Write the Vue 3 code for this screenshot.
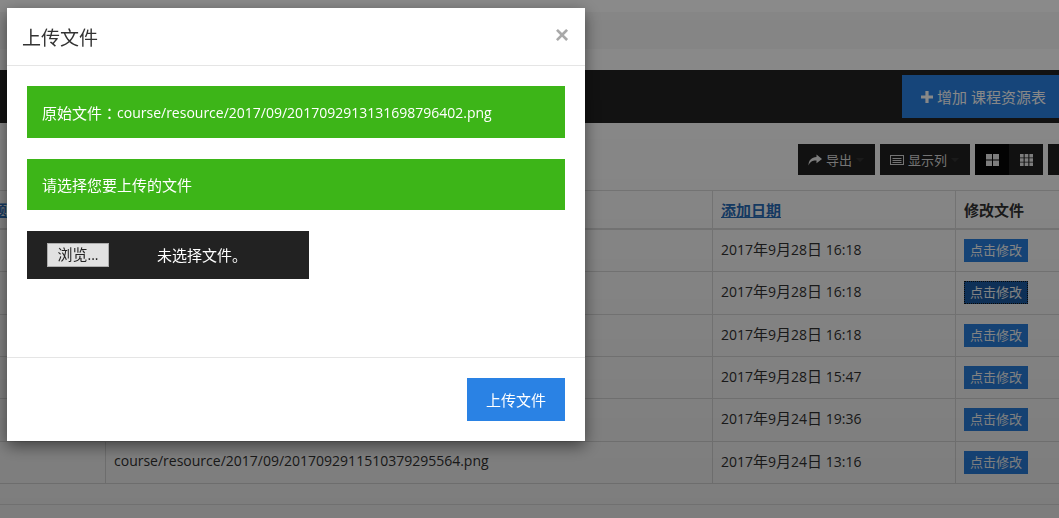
<script setup>
const splitText = (s) =>
  s.split(/([^\x00-\x7f]+)/).filter(Boolean).map((t) => ({ t, cjk: /[^\x00-\x7f]/.test(t) }))

const rows = [
  { date: '2017年9月28日 16:18' },
  { date: '2017年9月28日 16:18', focus: true },
  { date: '2017年9月28日 16:18' },
  { date: '2017年9月28日 15:47' },
  { date: '2017年9月24日 19:36' },
  { date: '2017年9月24日 13:16', file: 'course/resource/2017/09/2017092911510379295564.png' },
].map((r) => ({ ...r, parts: splitText(r.date) }))
</script>

<template>
  <div class="page">
    <div class="strip-a"></div>
    <div class="strip-b"></div>
    <div class="strip-c"></div>
    <div class="bar">
      <div class="add">
        <svg class="plus" viewBox="0 0 12 12" width="12" height="12"><path d="M4.4 0h3.2v4.4H12v3.2H7.6V12H4.4V7.6H0V4.4h4.4z" fill="#fff"/></svg>
        <span>增加 课程资源表</span>
      </div>
    </div>
    <div class="toolbar">
      <div class="tool">
        <svg viewBox="0 0 14 12" width="14" height="12"><path d="M8.5 0.5 14 5 8.5 9.2V6.6C5 6.4 2.2 7.4 0.6 11.4 0.4 6.4 3.6 3.2 8.5 3z" fill="#eee"/></svg>
        <span>导出</span><i class="caret"></i>
      </div>
      <div class="tool">
        <svg viewBox="0 0 14 12" width="14" height="12"><path fill-rule="evenodd" d="M0 1h14v10H0zM1 2v8h12V2zM2.5 4h9v1h-9zM2.5 6h9v1h-9zM2.5 8h9v1h-9z" fill="#ddd"/></svg>
        <span>显示列</span><i class="caret"></i>
      </div>
      <div class="group">
        <div class="seg active">
          <svg viewBox="0 0 13 12" width="13" height="12"><path d="M0 0h6v5.5H0zM7 0h6v5.5H7zM0 6.5h6V12H0zM7 6.5h6V12H7z" fill="#eee"/></svg>
        </div>
        <div class="seg">
          <svg viewBox="0 0 13 12" width="13" height="12"><path d="M0 0h3.6v3.4H0zM4.7 0h3.6v3.4H4.7zM9.4 0H13v3.4H9.4zM0 4.3h3.6v3.4H0zM4.7 4.3h3.6v3.4H4.7zM9.4 4.3H13v3.4H9.4zM0 8.6h3.6V12H0zM4.7 8.6h3.6V12H4.7zM9.4 8.6H13V12H9.4z" fill="#eee"/></svg>
        </div>
      </div>
      <div class="tool last"></div>
    </div>
    <div class="table">
      <div class="tr head">
        <div class="td first"><a class="link clip">题</a></div>
        <div class="td"></div>
        <div class="td"><a class="link">添加日期</a></div>
        <div class="td"><b class="th">修改文件</b></div>
      </div>
      <div v-for="(r, i) in rows" :key="i" class="tr">
        <div class="td first"></div>
        <div class="td"><span class="date">{{ r.file }}</span></div>
        <div class="td"><span class="date"><span v-for="(p, j) in r.parts" :key="j" :class="{ cjk: p.cjk }">{{ p.t }}</span></span></div>
        <div class="td"><span class="edit" :class="{ focus: r.focus }">点击修改</span></div>
      </div>
    </div>
    <div class="strip-d"></div>
  </div>

  <div class="backdrop"></div>

  <div class="modal">
    <div class="m-head">
      <h4>上传文件</h4>
      <span class="close">×</span>
    </div>
    <div class="m-body">
      <div class="note"><span class="cjk">原始文件</span><span class="cjk colon">：</span><span>course/resource/2017/09/2017092913131698796402.png</span></div>
      <div class="note second"><span class="cjk">请选择您要上传的文件</span></div>
      <div class="file">
        <span class="browse"><span class="cjk">浏览</span>...</span>
        <span class="none cjk">未选择文件。</span>
      </div>
    </div>
    <div class="m-foot">
      <span class="upload">上传文件</span>
    </div>
  </div>
</template>

<style>
html, body { margin: 0; height: 100%; overflow: hidden; background: #f6f6f6; }
</style>

<style scoped>
.page {
  width: 1080px;
  height: 518px;
  overflow: hidden;
  font-family: "Open Sans", "Noto Sans CJK SC", sans-serif;
  font-size: 14px;
  color: #333;
  background: #fff;
}
.cjk { font-size: 15px; }
.colon { font-family: "Noto Sans CJK TC", sans-serif; }
.strip-a { height: 12px; background: #fff; }
.strip-b { height: 37px; background: #f8f8f8; }
.strip-c { height: 21px; background: #fff; }
.bar {
  height: 53px;
  background: #222;
  display: flex;
  justify-content: flex-end;
  align-items: flex-start;
  padding-right: 14px;
  box-sizing: border-box;
}
.add {
  margin-top: 5px;
  height: 43px;
  width: 164px;
  box-sizing: border-box;
  padding-left: 19px;
  background: #2a82e4;
  color: #fff;
  font-size: 15px;
  display: flex;
  align-items: center;
  gap: 4px;
}
.toolbar {
  display: flex;
  justify-content: flex-end;
  gap: 5px;
  padding-top: 21px;
  height: 67px;
  box-sizing: border-box;
}
.tool {
  height: 31px;
  background: #222;
  color: #ddd;
  font-size: 13px;
  display: flex;
  align-items: center;
  gap: 4px;
  padding: 0 11px 0 10px;
  box-sizing: border-box;
}
.tool.last { width: 32px; padding: 0; }
.caret {
  border-top: 4px solid #333;
  border-left: 4px solid transparent;
  border-right: 4px solid transparent;
}
.group { display: flex; }
.seg {
  width: 34px;
  height: 31px;
  background: #222;
  display: flex;
  align-items: center;
  justify-content: center;
}
.seg.active { background: #060606; }
.table { border-top: 1px solid #ddd; border-bottom: 1px solid #ddd; }
.tr {
  display: grid;
  grid-template-columns: 105px 607px 243px 1fr;
  height: 42.33px;
  box-sizing: border-box;
  border-bottom: 1px solid #ddd;
}
.tr:last-child { border-bottom: 0; height: 41.33px; }
.tr.head { height: 39px; border-bottom-width: 2px; }
.td {
  padding: 0 8px;
  display: flex;
  align-items: center;
  overflow: hidden;
  white-space: nowrap;
  box-sizing: border-box;
  color: #333;
}
.td + .td { border-left: 1px solid #ddd; }
.first { padding: 0; }
.date { position: relative; top: -2px; }
.link { color: #2a6ebb; font-size: 15px; font-weight: 700; text-decoration: underline; }
.th { font-size: 15px; }
.clip { margin-left: -8px; }
.edit {
  background: #2a82e4;
  color: #fff;
  font-size: 13px;
  width: 64px;
  height: 23px;
  line-height: 23px;
  text-align: center;
  box-sizing: border-box;
}
.edit.focus {
  background: #1c5ea9;
  outline: 1px dotted #111;
  outline-offset: -1px;
}
.strip-d { height: 20px; border-bottom: 1px solid #e4e4e4; }
.backdrop {
  position: fixed;
  inset: 0;
  background: linear-gradient(to bottom, rgba(0,0,0,.46), rgba(0,0,0,.51));
}
.modal {
  position: fixed;
  left: 7px;
  top: 8px;
  width: 578px;
  height: 433px;
  background: #fff;
  box-shadow: 0 5px 15px rgba(0,0,0,.5);
  display: flex;
  flex-direction: column;
  font-family: "Open Sans", "Noto Sans CJK SC", sans-serif;
  font-size: 14px;
  color: #333;
}
.m-head {
  height: 58px;
  flex: none;
  box-sizing: border-box;
  border-bottom: 1px solid #e5e5e5;
  padding: 0 16px 0 15px;
  display: flex;
  justify-content: space-between;
  align-items: center;
}
h4 { margin: 0; font-size: 19px; font-weight: 400; color: #333; }
.close { font-size: 24px; font-weight: 700; color: #a9a9a9; font-family: "Liberation Sans", sans-serif; margin-top: -4px; }
.m-body {
  flex: 1;
  padding: 20px;
  display: flex;
  flex-direction: column;
  gap: 21px;
}
.note {
  height: 52px;
  background: #3db518;
  color: #fff;
  display: flex;
  align-items: center;
  padding: 0 15px;
}
.second { height: 51px; }
.file {
  width: 282px;
  height: 48px;
  background: #222;
  color: #fff;
  display: flex;
  align-items: center;
  padding-left: 20px;
  box-sizing: border-box;
}
.browse {
  width: 62px;
  height: 24px;
  box-sizing: border-box;
  background: #e1e1e1;
  border: 1px solid #adadad;
  color: #222;
  text-align: center;
  line-height: 21px;
}
.none { margin-left: 48px; position: relative; top: -1px; }
.m-foot {
  flex: none;
  height: 84px;
  box-sizing: border-box;
  border-top: 1px solid #e5e5e5;
  display: flex;
  justify-content: flex-end;
  padding: 20px;
}
.upload {
  width: 98px;
  height: 43px;
  background: #2a82e4;
  color: #fff;
  font-size: 15px;
  display: flex;
  align-items: center;
  justify-content: center;
}
</style>
